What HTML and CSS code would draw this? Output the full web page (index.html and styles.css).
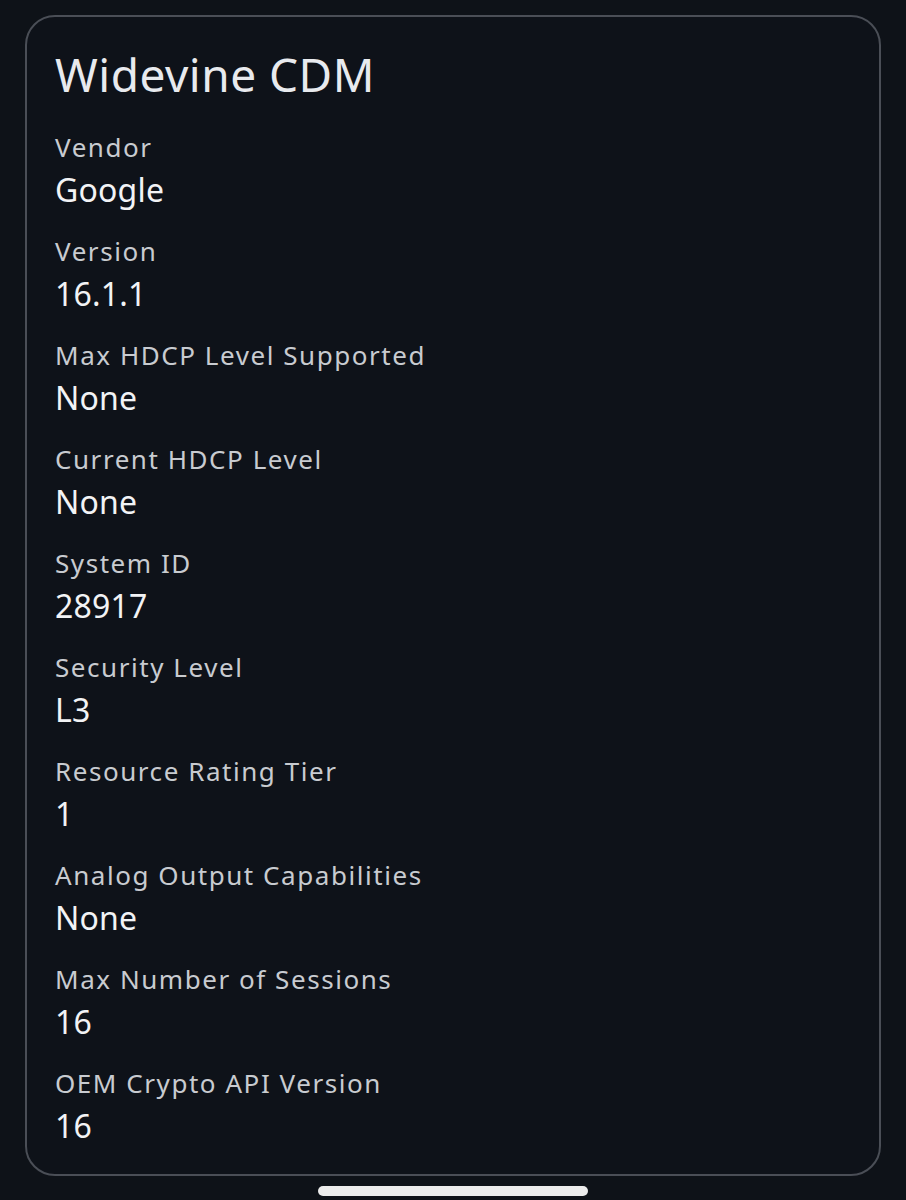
FILE: index.html
```html
<!DOCTYPE html>
<html lang="en">
<head>
<meta charset="utf-8">
<title>Widevine CDM</title>
<link rel="stylesheet" href="styles.css">
</head>
<body>
<main class="screen">
  <section class="card">
    <h1 class="title">Widevine CDM</h1>
    <dl class="list">
      <div class="row"><dt class="label">Vendor</dt><dd class="value">Google</dd></div>
      <div class="row"><dt class="label">Version</dt><dd class="value">16.1.1</dd></div>
      <div class="row"><dt class="label">Max HDCP Level Supported</dt><dd class="value">None</dd></div>
      <div class="row"><dt class="label">Current HDCP Level</dt><dd class="value">None</dd></div>
      <div class="row"><dt class="label">System ID</dt><dd class="value">28917</dd></div>
      <div class="row"><dt class="label">Security Level</dt><dd class="value">L3</dd></div>
      <div class="row"><dt class="label">Resource Rating Tier</dt><dd class="value">1</dd></div>
      <div class="row"><dt class="label">Analog Output Capabilities</dt><dd class="value">None</dd></div>
      <div class="row"><dt class="label">Max Number of Sessions</dt><dd class="value">16</dd></div>
      <div class="row"><dt class="label">OEM Crypto API Version</dt><dd class="value">16</dd></div>
    </dl>
  </section>
  <div class="home-indicator"></div>
</main>
</body>
</html>
```
FILE: styles.css
```css
* { box-sizing: border-box; }
html, body {
  margin: 0;
  padding: 0;
  background: #0e1218;
}
body {
  font-family: "Noto Sans", "Open Sans", sans-serif;
  color: #eef0f3;
  width: 906px;
  height: 1200px;
  overflow: hidden;
}
.screen {
  display: flex;
  flex-direction: column;
  align-items: center;
  padding: 15px 25px 0 25px;
}
.card {
  width: 856px;
  height: 1161px;
  border: 2px solid #4a4e56;
  border-radius: 30px;
  background: #0e1219;
  padding: 29px 28px 24px 28px;
}
.title {
  margin: 0;
  font-size: 46px;
  line-height: 56px;
  font-weight: 400;
  letter-spacing: 0.5px;
  color: #e8eaee;
}
.list {
  margin: 26px 0 0 0;
  display: flex;
  flex-direction: column;
  gap: 20px;
}
.row {
  display: flex;
  flex-direction: column;
}
.label {
  font-size: 26px;
  line-height: 39px;
  letter-spacing: 1.55px;
  color: #c8cbd0;
}
.value {
  margin: 0;
  font-size: 32px;
  line-height: 45px;
  letter-spacing: 0.2px;
  color: #f2f3f5;
}
.home-indicator {
  margin-top: 10px;
  width: 270px;
  height: 10px;
  border-radius: 5px;
  background: #ececec;
}
```
